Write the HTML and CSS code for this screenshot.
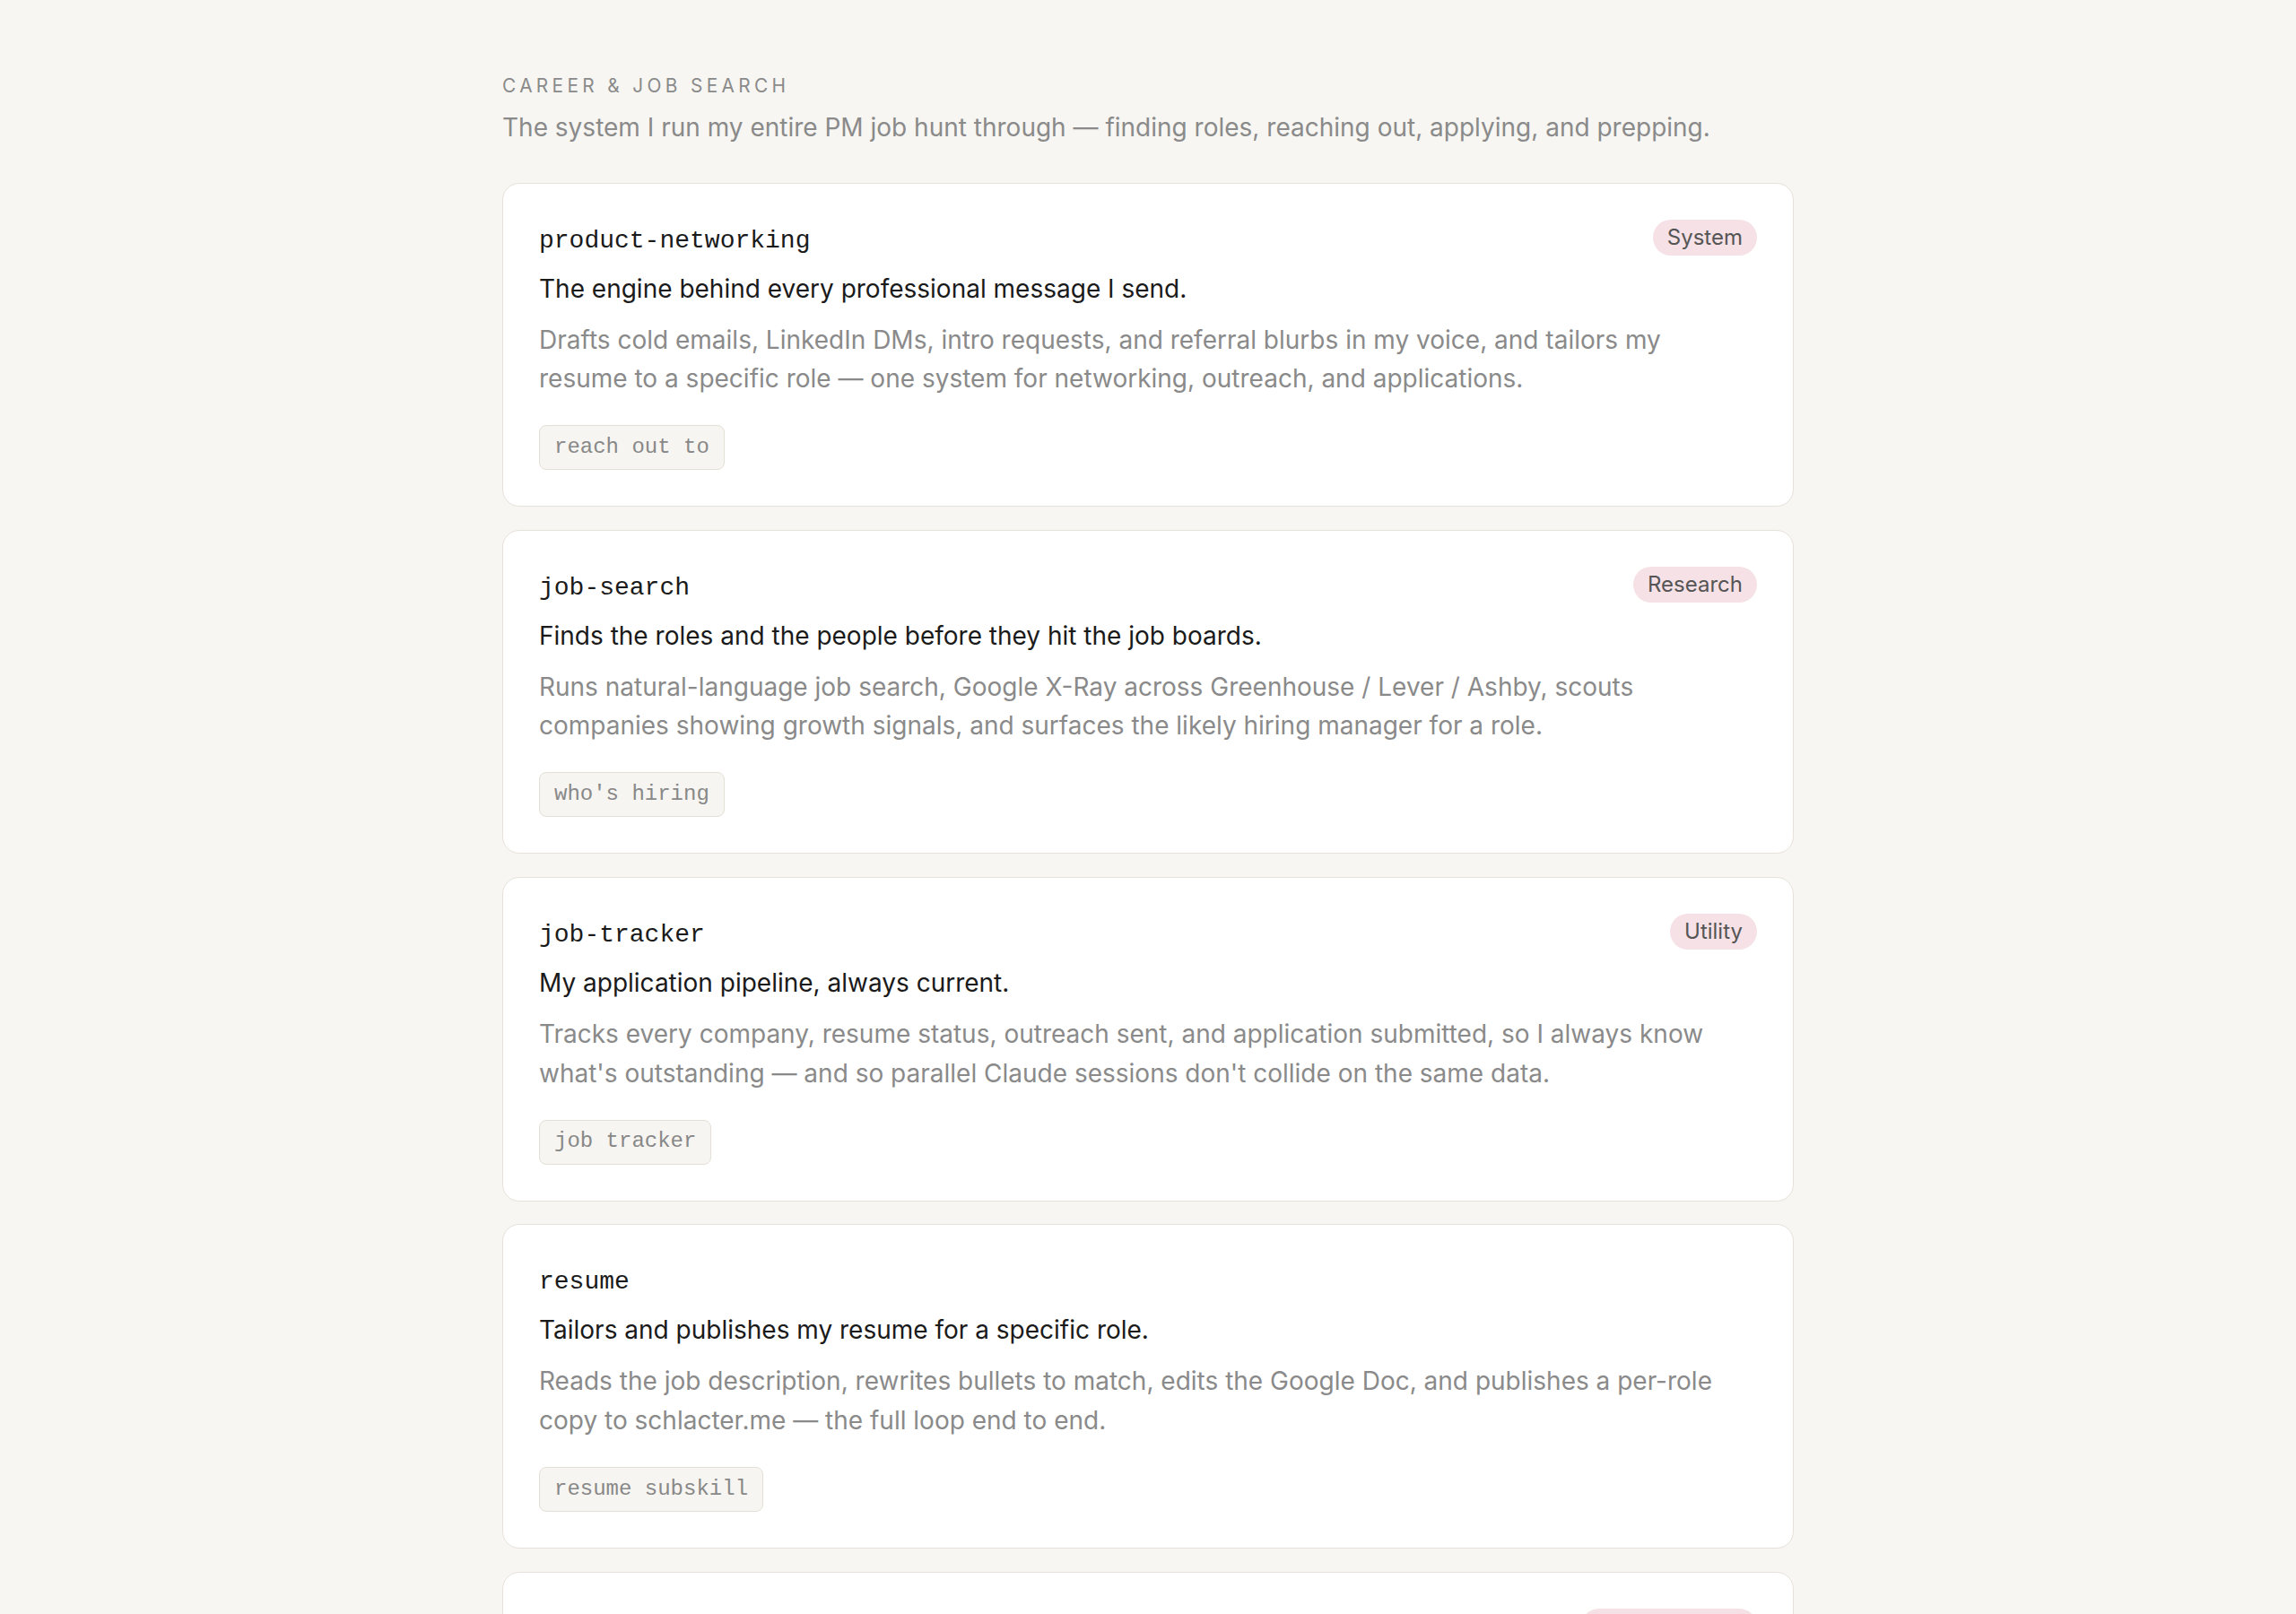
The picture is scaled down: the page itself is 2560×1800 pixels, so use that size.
FILE: index.html
```html
<!DOCTYPE html>
<html lang="en">
<head>
    <meta charset="UTF-8">
    <title>Skills - Career &amp; Job Search</title>
    <link rel="stylesheet" href="styles.css">
</head>
<body>
    <div class="container">
        <section class="group">
            <div class="group-label">Career &amp; Job Search</div>
            <p class="group-intro">The system I run my entire PM job hunt through — finding roles, reaching out, applying, and prepping.</p>

            <div class="skill-list">
                <div class="skill-card">
                    <div class="skill-head">
                        <span class="skill-name">product-networking</span>
                        <span class="tag">System</span>
                    </div>
                    <div class="skill-title">The engine behind every professional message I send.</div>
                    <p class="skill-desc">Drafts cold emails, LinkedIn DMs, intro requests, and referral blurbs in my voice, and tailors my resume to a specific role — one system for networking, outreach, and applications.</p>
                    <div class="triggers"><code class="trigger">reach out to</code></div>
                </div>

                <div class="skill-card">
                    <div class="skill-head">
                        <span class="skill-name">job-search</span>
                        <span class="tag">Research</span>
                    </div>
                    <div class="skill-title">Finds the roles and the people before they hit the job boards.</div>
                    <p class="skill-desc">Runs natural-language job search, Google X-Ray across Greenhouse / Lever / Ashby, scouts companies showing growth signals, and surfaces the likely hiring manager for a role.</p>
                    <div class="triggers"><code class="trigger">who's hiring</code></div>
                </div>

                <div class="skill-card">
                    <div class="skill-head">
                        <span class="skill-name">job-tracker</span>
                        <span class="tag">Utility</span>
                    </div>
                    <div class="skill-title">My application pipeline, always current.</div>
                    <p class="skill-desc">Tracks every company, resume status, outreach sent, and application submitted, so I always know what's outstanding — and so parallel Claude sessions don't collide on the same data.</p>
                    <div class="triggers"><code class="trigger">job tracker</code></div>
                </div>

                <div class="skill-card">
                    <div class="skill-head">
                        <span class="skill-name">resume</span>
                    </div>
                    <div class="skill-title">Tailors and publishes my resume for a specific role.</div>
                    <p class="skill-desc">Reads the job description, rewrites bullets to match, edits the Google Doc, and publishes a per-role copy to schlacter.me — the full loop end to end.</p>
                    <div class="triggers"><code class="trigger">resume subskill</code></div>
                </div>

                <div class="skill-card">
                    <div class="skill-head">
                        <span class="skill-name">interview-prep</span>
                        <span class="tag">Interview Prep</span>
                    </div>
                    <div class="skill-title">Gets me ready for every round.</div>
                    <p class="skill-desc">Builds company briefs, likely questions, and story banks for each interview loop.</p>
                    <div class="triggers"><code class="trigger">prep for</code></div>
                </div>
            </div>
        </section>
    </div>
</body>
</html>
```

FILE: styles.css
```css
body {
    font-family: Inter, "Noto Sans", sans-serif;
    margin: 0;
    padding: 0;
    background-color: #f7f6f2;
    color: #1a1a1a;
}
.container {
    max-width: 1440px;
    margin: 0 auto;
    padding: 83px 0 80px;
}
.group-label {
    font-size: 20.8px;
    line-height: normal;
    letter-spacing: 0.21em;
    text-transform: uppercase;
    color: #8a8a8a;
}
.group-intro {
    margin: 13px 0 39px;
    font-size: 28px;
    line-height: 43.5px;
    color: #8a8a8a;
}
.skill-list {
    display: flex;
    flex-direction: column;
    gap: 25.6px;
}
.skill-card {
    background: #fff;
    border: 1px solid #e6e2d9;
    border-radius: 19px;
    padding: 40px;
}
.skill-head {
    display: flex;
    justify-content: space-between;
    align-items: flex-start;
}
.skill-name {
    font-family: "Liberation Mono", monospace;
    font-size: 28px;
    line-height: 40px;
    padding-top: 4px;
    color: #1a1a1a;
}
.tag {
    font-size: 24px;
    line-height: 40px;
    padding: 0 16px;
    border-radius: 20px;
    background: #f5e1e6;
    color: #555;
}
.skill-title {
    margin-top: 12px;
    font-size: 28px;
    line-height: 42px;
    color: #1a1a1a;
}
.skill-desc {
    margin: 15px 0 29.7px;
    max-width: 1320px;
    font-size: 28px;
    line-height: 43.5px;
    color: #8a8a8a;
}
.triggers {
    display: flex;
    gap: 12px;
}
.trigger {
    font-family: "Liberation Mono", monospace;
    font-size: 24px;
    line-height: 1.2;
    padding: 9.6px 16px;
    border: 1px solid #e4e0d6;
    border-radius: 8px;
    background: #f7f5f1;
    color: #888;
}
```
